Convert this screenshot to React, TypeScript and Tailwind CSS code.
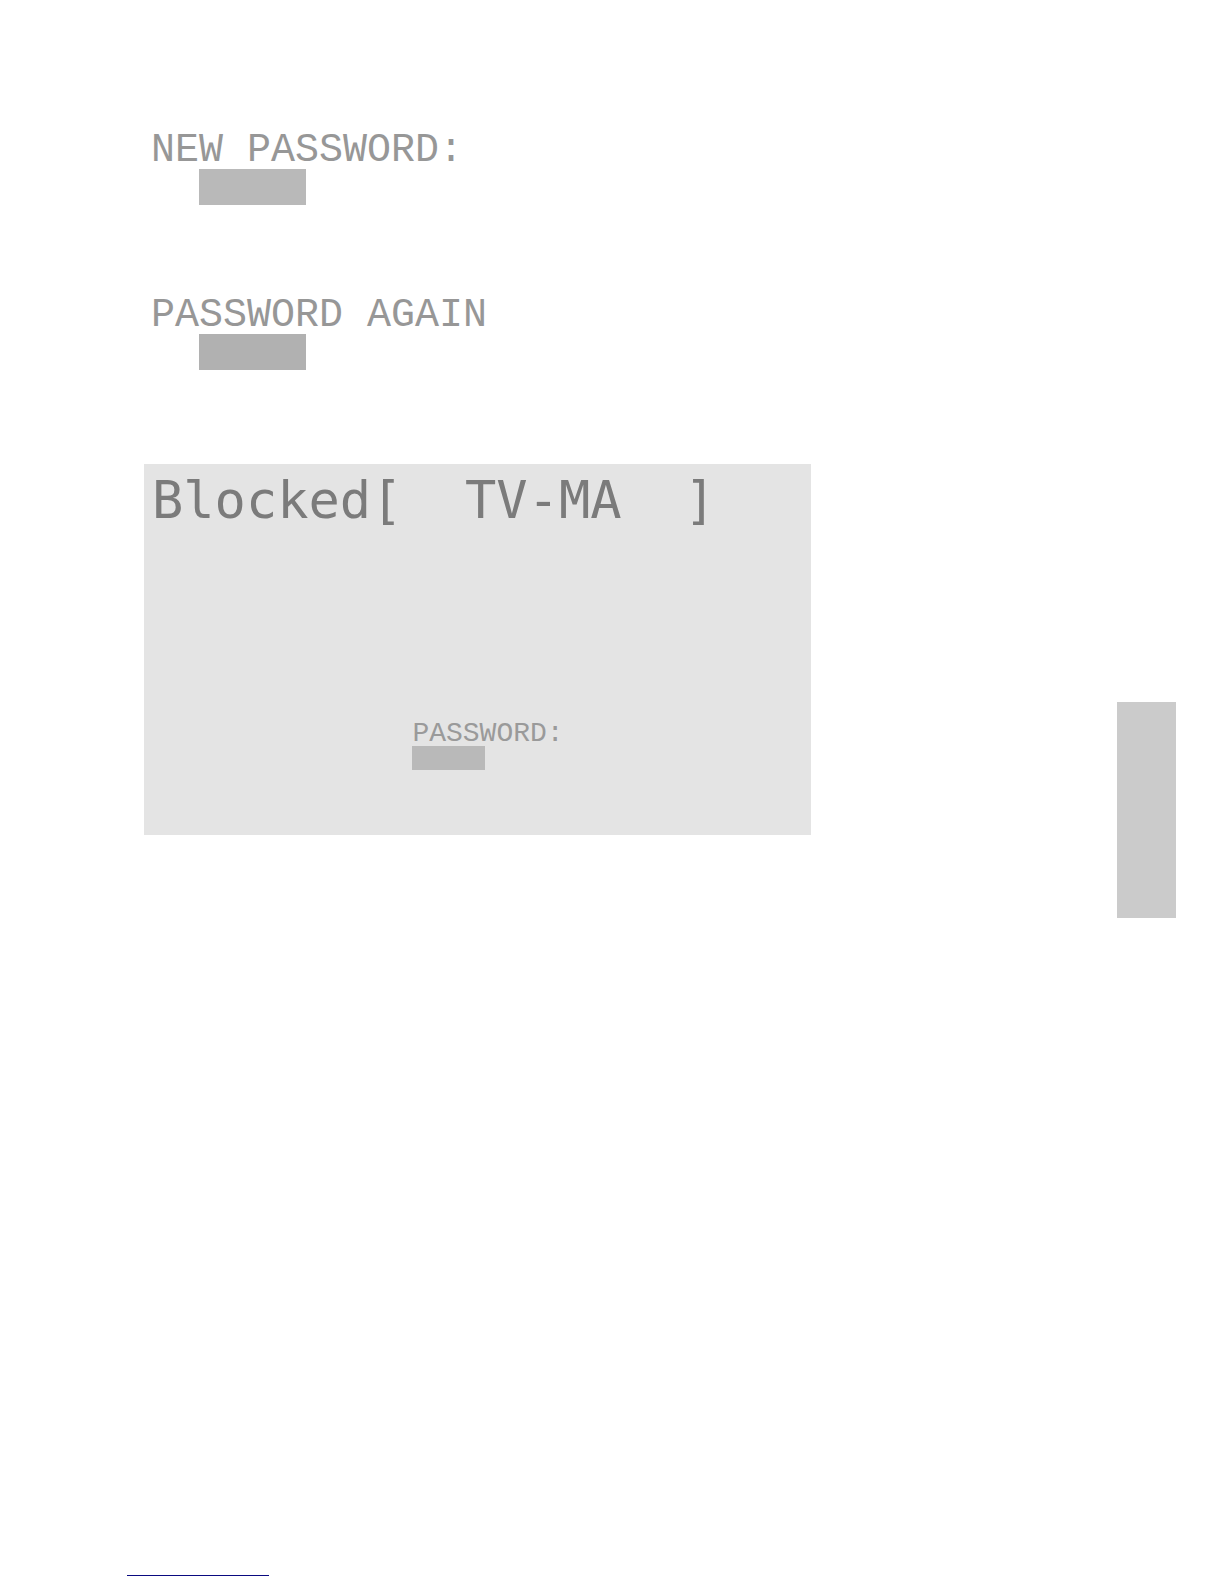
interface Field {
  id: string;
  label: string;
  fill: string;
}

const FIELDS: Field[] = [
  { id: 'new-password', label: 'NEW PASSWORD:', fill: 'bg-[#b9b9b9]' },
  { id: 'password-again', label: 'PASSWORD AGAIN', fill: 'bg-[#b1b1b1]' },
];

function PasswordField({ id, label, fill }: Field) {
  return (
    <div className="flex flex-col">
      <label
        htmlFor={id}
        className="whitespace-pre font-['Liberation_Mono',monospace] text-[40px] leading-9 text-[#979797]"
      >
        {label}
      </label>
      <input id={id} type="password" className={`ml-12 h-9 w-[107px] px-2 outline-none ${fill}`} />
    </div>
  );
}

function BlockedPanel() {
  return (
    <section className="flex w-full max-w-[667px] flex-col bg-[#e4e4e4] px-2 pt-0.5 pb-[65px]">
      <h1 className="whitespace-pre font-['DejaVu_Sans_Mono',monospace] text-[52px] leading-[68px] text-[#7b7b7b]">
        {'Blocked[  TV-MA  ]'}
      </h1>
      <div className="mt-[188px] ml-[40%] flex flex-col">
        <label
          htmlFor="unlock-password"
          className="font-['Liberation_Mono',monospace] text-[28px] leading-6 text-[#9a9a9a]"
        >
          PASSWORD:
        </label>
        <input id="unlock-password" type="password" className="h-6 w-[73px] bg-[#b9b9b9] px-1 outline-none" />
      </div>
    </section>
  );
}

export default function App() {
  return (
    <div className="flex min-h-screen flex-col bg-white">
      <div className="flex items-start justify-between pr-12">
        <main className="flex min-w-0 flex-1 flex-col pt-[133px] pl-36">
          <form className="mb-[94px] flex flex-col gap-[93px] pl-[7px]">
            {FIELDS.map(f => (
              <PasswordField key={f.id} {...f} />
            ))}
          </form>
          <BlockedPanel />
        </main>

        {/* Section thumb tab */}
        <aside className="mt-[702px] h-[216px] w-[59px] shrink-0 bg-[#cbcbcb]" />
      </div>

      <footer className="mt-auto pb-2 pl-[127px]">
        <hr className="w-[142px] border-t border-[#0a0a80]" />
      </footer>
    </div>
  );
}
